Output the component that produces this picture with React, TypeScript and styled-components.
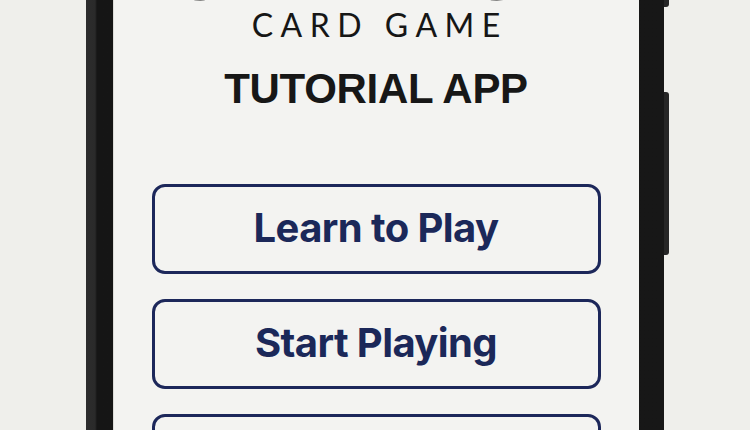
import * as React from "react";
import styled, { createGlobalStyle } from "styled-components";

const GlobalStyle = createGlobalStyle`
  html, body {
    margin: 0;
    padding: 0;
    background: #efefeb;
    overflow: hidden;
  }
  body {
    width: 750px;
    height: 430px;
  }
`;

const Stage = styled.div`
  width: 750px;
  height: 430px;
  display: flex;
  justify-content: center;
  overflow: hidden;
`;

const Phone = styled.div`
  position: relative;
  width: 578px;
  height: 470px;
  margin-top: -20px;
  box-sizing: border-box;
  padding: 0 25px 0 27px;
  background: linear-gradient(
    90deg,
    #2c2c2c 0px,
    #2a2a2a 9px,
    #151515 11px,
    #171717 100%
  );
`;

const SideButton = styled.div<{ $top: number; $height: number }>`
  position: absolute;
  right: -5px;
  top: ${(p) => p.$top}px;
  width: 5px;
  height: ${(p) => p.$height}px;
  background: #262626;
  border-radius: 0 3px 3px 0;
`;

const Screen = styled.div`
  height: 100%;
  background: #f3f3f1;
  display: flex;
  flex-direction: column;
  align-items: center;
  overflow: hidden;
  box-shadow: inset 1px 0 0 #dcdcd8;
`;

// scrolled-off logo line: only the bottoms of its round letters peek in
const Headline = styled.div`
  font-family: "Liberation Sans", Arial, sans-serif;
  font-weight: 700;
  font-size: 70px;
  line-height: 66px;
  height: 66px;
  color: #111;
  letter-spacing: 4px;
  margin-top: -37px;
`;

const Subtitle = styled.div`
  font-family: Lato, "Open Sans", sans-serif;
  font-weight: 400;
  font-size: 32px;
  line-height: 32px;
  letter-spacing: 7.5px;
  padding-left: 7.5px;
  color: #161616;
  margin-top: 0;
`;

const AppTitle = styled.div`
  font-family: "Liberation Sans", Arial, sans-serif;
  font-weight: 700;
  font-size: 42px;
  line-height: 42px;
  letter-spacing: -0.3px;
  color: #171717;
  margin-top: 27px;
`;

const Menu = styled.div`
  display: flex;
  flex-direction: column;
  gap: 25px;
  width: 449px;
  margin-top: 74px;
`;

const MenuButton = styled.button`
  height: 90px;
  box-sizing: border-box;
  border: 3px solid #1c275a;
  border-radius: 13px;
  background: transparent;
  color: #1b2859;
  font-family: Inter, "Liberation Sans", sans-serif;
  font-weight: 700;
  font-size: 40px;
  letter-spacing: -0.6px;
  display: flex;
  align-items: center;
  justify-content: center;
  padding: 0 0 3px;
  cursor: pointer;
`;

const items = ["Learn to Play", "Start Playing", "Rules & Scoring"];

export default function App() {
  return (
    <>
      <GlobalStyle />
      <Stage>
        <Phone>
          <SideButton $top={13} $height={14} />
          <SideButton $top={112} $height={163} />
          <Screen>
            <Headline>CRIBBAGE</Headline>
            <Subtitle>CARD GAME</Subtitle>
            <AppTitle>TUTORIAL APP</AppTitle>
            <Menu>
              {items.map((label) => (
                <MenuButton key={label}>{label}</MenuButton>
              ))}
            </Menu>
          </Screen>
        </Phone>
      </Stage>
    </>
  );
}
